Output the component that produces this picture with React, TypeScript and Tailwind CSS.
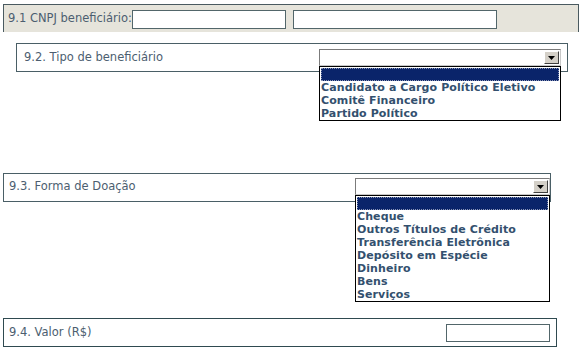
const font = { fontFamily: '"DejaVu Sans", Verdana, sans-serif' };

function Arrow() {
  return (
    <span className="flex h-[13px] w-[15px] items-center justify-center border border-t-[#ffffff] border-l-[#ffffff] border-r-[#404040] border-b-[#404040] bg-[#d4d0c8]">
      <svg width="7" height="4" viewBox="0 0 7 4">
        <path d="M0 0h7L3.5 4z" fill="#000" />
      </svg>
    </span>
  );
}

function Dropdown({ width, items }: { width: string; items: string[] }) {
  return (
    <div className={`relative ${width}`}>
      <div className="flex h-[17px] items-center justify-end border border-t-[#7b7b7b] border-l-[#7b7b7b] border-r-[#c8c8c8] border-b-[#c8c8c8] bg-white pr-[1px]">
        <Arrow />
      </div>
      <ul className="absolute left-0 top-[17px] z-10 w-full border border-black bg-white pt-[1px]">
        <li className="mx-[1px] h-[13px] border border-dotted border-[#8a95b5] bg-[#0a246a]" />
        {items.map((t) => (
          <li key={t} className="h-[13px] pl-[1px] text-[11px] font-bold leading-[13px] tracking-[0.1px] text-[#33506e]">
            {t}
          </li>
        ))}
      </ul>
    </div>
  );
}

export default function App() {
  return (
    <div className="min-h-[356px] w-[585px] bg-white pt-[4px] text-[11.5px] text-[#4c5e70]" style={font}>
      <div className="mx-[3px] flex h-[28px] w-[576px] items-center border-x border-t border-[#4a5a60] bg-[#e6e4db] pl-[4px] pt-[1px]">
        <span>9.1 CNPJ beneficiário:</span>
        <input className="h-[19px] w-[154px] border border-[#52666a] bg-white outline-none" />
        <input className="ml-[7px] h-[19px] w-[204px] border border-[#52666a] bg-white outline-none" />
      </div>

      <div className="ml-[16px] mt-[11px] flex h-[29px] w-[552px] items-start border border-[#4a5f66] pl-[7px] pt-[5px]">
        <span className="w-[295px] pt-[1px] leading-[14px]">9.2. Tipo de beneficiário</span>
        <Dropdown
          width="w-[242px]"
          items={['Candidato a Cargo Político Eletivo', 'Comitê Financeiro', 'Partido Político']}
        />
      </div>

      <div className="ml-[3px] mt-[101px] flex h-[29px] w-[548px] items-start border border-[#4a5f66] pl-[5px] pt-[4px]">
        <span className="w-[346px] pt-[1px] leading-[14px]">9.3. Forma de Doação</span>
        <Dropdown
          width="w-[195px]"
          items={[
            'Cheque',
            'Outros Títulos de Crédito',
            'Transferência Eletrônica',
            'Depósito em Espécie',
            'Dinheiro',
            'Bens',
            'Serviços',
          ]}
        />
      </div>

      <div className="ml-[3px] mt-[116px] flex h-[29px] w-[554px] items-center justify-between border border-[#2f4a50] pl-[5px] pr-[6px]">
        <span>9.4. Valor (R$)</span>
        <input className="h-[18px] w-[104px] border border-[#52666a] bg-white outline-none" />
      </div>
    </div>
  );
}
